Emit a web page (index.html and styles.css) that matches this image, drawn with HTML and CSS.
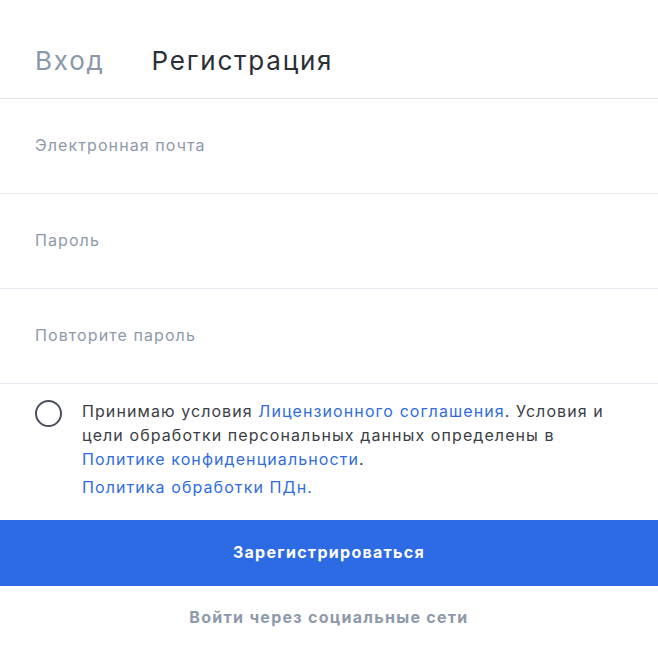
FILE: index.html
```html
<!DOCTYPE html>
<html lang="ru">
<head>
<meta charset="utf-8">
<link rel="stylesheet" href="styles.css">
</head>
<body>
<div class="auth">
  <div class="tabs">
    <span class="tab">Вход</span>
    <span class="tab active">Регистрация</span>
  </div>
  <div class="field"><span class="placeholder">Электронная почта</span></div>
  <div class="field"><span class="placeholder">Пароль</span></div>
  <div class="field"><span class="placeholder">Повторите пароль</span></div>
  <div class="consent">
    <span class="radio"></span>
    <div class="consent-text">
      <p>Принимаю условия <a href="#">Лицензионного соглашения</a>. Условия и цели обработки персональных данных определены в <a href="#">Политике конфиденциальности</a>.</p>
      <p class="second"><a href="#">Политика обработки ПДн.</a></p>
    </div>
  </div>
  <button class="submit">Зарегистрироваться</button>
  <div class="social">Войти через социальные сети</div>
</div>
</body>
</html>
```

FILE: styles.css
```css
* { box-sizing: border-box; }
html, body { margin: 0; padding: 0; background: #fff; }
body { font-family: Inter, "Noto Sans", sans-serif; color: #2f333a; letter-spacing: 0.068em; }
.auth { width: 658px; }
.tabs {
  display: flex;
  gap: 47px;
  padding: 43px 35px 0;
  height: 99px;
  border-bottom: 1px solid #dde4ed;
}
.tab { font-size: 26px; line-height: 36px; color: #8b97aa; letter-spacing: 0.068em; }
.tab.active { color: #2b2f36; }
.field {
  height: 95px;
  border-bottom: 1px solid #e6ebf1;
  display: flex;
  align-items: center;
  padding-left: 35px;
  padding-bottom: 2px;
}
.placeholder { font-size: 16px; color: #8e99ab; }
.consent {
  display: flex;
  padding: 15px 35px 0 35px;
  height: 136px;
}
.radio {
  flex: none;
  width: 27px; height: 27px;
  border: 2px solid #4a505c;
  border-radius: 50%;
  margin-right: 20px;
  margin-top: 1px;
}
.consent-text { width: 532px; font-size: 16px; line-height: 24px; color: #3a3e45; }
.consent-text p { margin: 0; }
.consent-text p.second { margin-top: 4px; }
.consent-text a { color: #2f6de1; text-decoration: none; }
.submit {
  display: block;
  width: 100%;
  height: 66px;
  padding: 0 0 2px;
  border: 0;
  background: #2d6be4;
  color: #fff;
  font-family: inherit;
  font-size: 16px;
  font-weight: 700;
  letter-spacing: 0.08em;
}
.social {
  height: 64px;
  display: flex;
  align-items: center;
  justify-content: center;
  padding-bottom: 2px;
  font-size: 16px;
  font-weight: 700;
  color: #8e99ab;
  letter-spacing: 0.08em;
}
```
